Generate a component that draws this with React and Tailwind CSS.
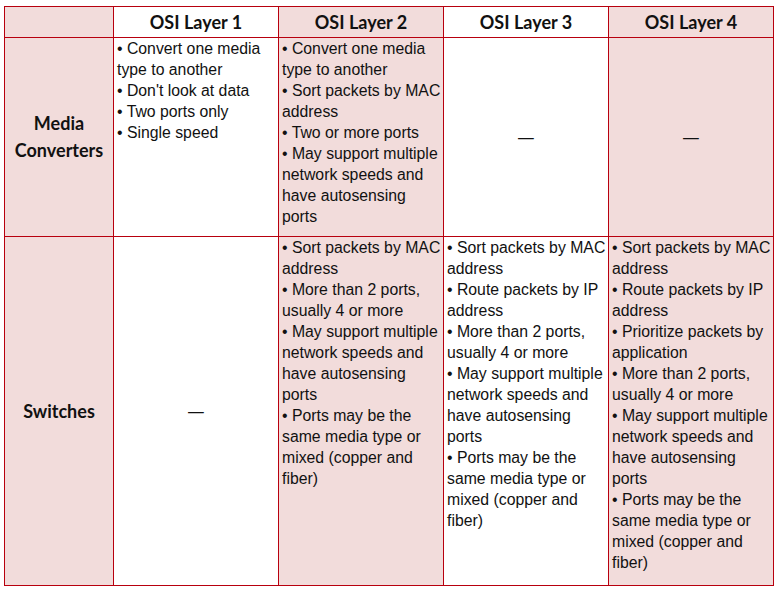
const head = ["OSI Layer 1", "OSI Layer 2", "OSI Layer 3", "OSI Layer 4"];

const rows = [
  {
    label: ["Media", "Converters"],
    height: "h-[199px]",
    cells: [
      ["• Convert one media", "type to another", "• Don't look at data", "• Two ports only", "• Single speed"],
      [
        "• Convert one media",
        "type to another",
        "• Sort packets by MAC",
        "address",
        "• Two or more ports",
        "• May support multiple",
        "network speeds and",
        "have autosensing",
        "ports",
      ],
      null,
      null,
    ],
  },
  {
    label: ["Switches"],
    height: "h-[349px]",
    cells: [
      null,
      [
        "• Sort packets by MAC",
        "address",
        "• More than 2 ports,",
        "usually 4 or more",
        "• May support multiple",
        "network speeds and",
        "have autosensing",
        "ports",
        "• Ports may be the",
        "same media type or",
        "mixed (copper and",
        "fiber)",
      ],
      [
        "• Sort packets by MAC",
        "address",
        "• Route packets by IP",
        "address",
        "• More than 2 ports,",
        "usually 4 or more",
        "• May support multiple",
        "network speeds and",
        "have autosensing",
        "ports",
        "• Ports may be the",
        "same media type or",
        "mixed (copper and",
        "fiber)",
      ],
      [
        "• Sort packets by MAC",
        "address",
        "• Route packets by IP",
        "address",
        "• Prioritize packets by",
        "application",
        "• More than 2 ports,",
        "usually 4 or more",
        "• May support multiple",
        "network speeds and",
        "have autosensing",
        "ports",
        "• Ports may be the",
        "same media type or",
        "mixed (copper and",
        "fiber)",
      ],
    ],
  },
];

// odd columns are pink, even ones white
const shade = (i) => (i % 2 === 1 ? "bg-white" : "bg-[#f2dcdb]");

const App = () => {
  return (
    <div className="min-h-screen bg-white pl-[4px] pt-[6px]">
      <table className="w-[769px] table-fixed border-collapse border border-[#b8000e] text-[#111]">
        <colgroup>
          <col className="w-[109px]" />
          <col className="w-[165px]" />
          <col className="w-[165px]" />
          <col className="w-[165px]" />
          <col className="w-[165px]" />
        </colgroup>
        <thead>
          <tr className="h-[31px] font-['Lato',sans-serif] text-[18px] font-bold">
            <th className="border border-[#b8000e] bg-[#f2dcdb]" />
            {head.map((h, i) => (
              <th key={h} className={`border border-[#b8000e] text-center ${shade(i + 1)}`}>
                {h}
              </th>
            ))}
          </tr>
        </thead>
        <tbody className="font-['Liberation_Sans',Arial,sans-serif] text-[15.8px] leading-[21px]">
          {rows.map((row) => (
            <tr key={row.label.join(" ")} className={row.height}>
              <td className="border border-[#b8000e] bg-[#f2dcdb] text-center align-middle font-['Lato',sans-serif] text-[18px] font-bold leading-[27px]">
                {row.label.map((l) => (
                  <div key={l}>{l}</div>
                ))}
              </td>
              {row.cells.map((lines, i) =>
                lines ? (
                  <td key={i} className={`border border-[#b8000e] px-[3px] pt-0 align-top ${shade(i + 1)}`}>
                    {lines.map((l, j) => (
                      <div key={j} className="whitespace-nowrap">
                        {l}
                      </div>
                    ))}
                  </td>
                ) : (
                  <td key={i} className={`border border-[#b8000e] text-center align-middle ${shade(i + 1)}`}>
                    —
                  </td>
                )
              )}
            </tr>
          ))}
        </tbody>
      </table>
    </div>
  );
};

export default App;
